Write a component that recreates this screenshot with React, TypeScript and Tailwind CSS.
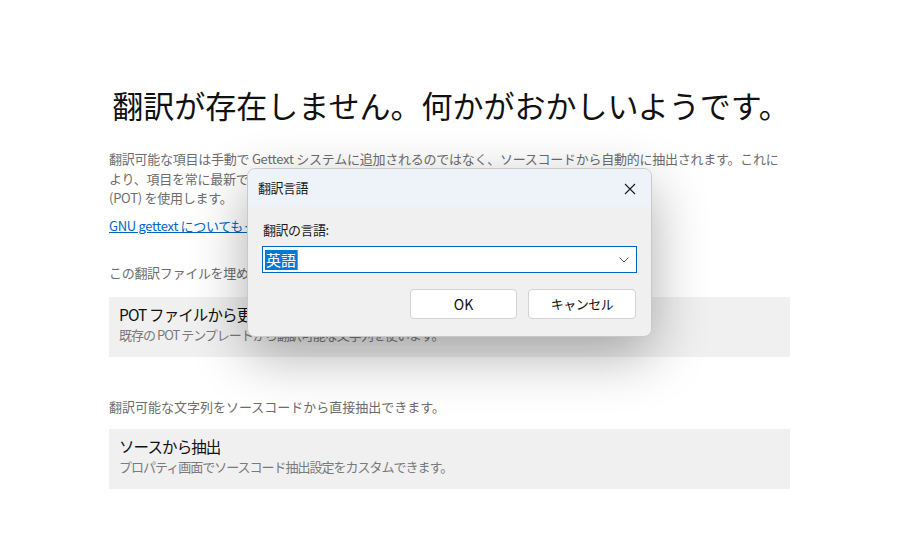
import React from "react";

const font = { fontFamily: '"Noto Sans CJK JP", "Noto Sans", sans-serif' };

function Card({ title, sub }: { title: string; sub: string }) {
  return (
    <div className="bg-[#f0f0f0] h-[60px] px-[10px] pt-[6px] flex flex-col">
      <div className="text-[15.5px] leading-[22px] text-[#111] tracking-[-0.9px]">{title}</div>
      <div className="text-[13px] leading-[20px] text-[#7a7a7a] tracking-[-1px]">{sub}</div>
    </div>
  );
}

export default function App() {
  return (
    <div className="relative w-[910px] h-[556px] bg-white overflow-hidden" style={font}>
      <div className="ml-[109px] w-[681px] pt-[85px] flex flex-col">
        <h1 className="-ml-[20px] -mr-[23px] text-[31px] leading-[40px] text-[#111] text-center whitespace-nowrap font-normal">
          翻訳が存在しません。何かがおかしいようです。
        </h1>
        <p className="mt-[24px] text-[13px] leading-[19.5px] text-[#6d6d6d] tracking-[-0.25px] whitespace-nowrap">
          翻訳可能な項目は手動で Gettext システムに追加されるのではなく、ソースコードから自動的に抽出されます。これに
          <br />
          より、項目を常に最新で正確な状態に保つことができます。翻訳にはテンプレートファイル
          <br />
          (POT) を使用します。
        </p>
        <a className="mt-[8px] text-[13px] leading-[19.5px] text-[#0067c0] underline tracking-[-0.3px]" href="#">
          GNU gettext についてもっと詳しく
        </a>
        <p className="mt-[28px] text-[13px] leading-[19.5px] text-[#6d6d6d] tracking-[-0.3px]">
          この翻訳ファイルを埋める方法は 2 つあります:
        </p>
        <div className="mt-[14px]">
          <Card title="POT ファイルから更新" sub="既存の POT テンプレートから翻訳可能な文字列を使います。" />
        </div>
        <p className="mt-[40px] text-[13px] leading-[19.5px] text-[#6d6d6d] tracking-[0px]">
          翻訳可能な文字列をソースコードから直接抽出できます。
        </p>
        <div className="mt-[13px]">
          <Card title="ソースから抽出" sub="プロパティ画面でソースコード抽出設定をカスタムできます。" />
        </div>
      </div>

      {/* Dialog */}
      <div className="absolute left-[247px] top-[168px] w-[405px] h-[169px] rounded-[8px] border border-[#c9c9c9] bg-[#f0f0f0] shadow-[0_18px_55px_rgba(0,0,0,0.32)] overflow-hidden flex flex-col">
        <div className="h-[38px] bg-[#eef2f9] flex items-center justify-between pl-[10px] pr-[15px]">
          <span className="text-[13px] text-[#1a1a1a] tracking-[-0.5px]">翻訳言語</span>
          <svg width="12" height="12" viewBox="0 0 12 12" className="mt-[1px]">
            <path d="M1 1L11 11M11 1L1 11" stroke="#1a1a1a" strokeWidth="1.1" />
          </svg>
        </div>
        <div className="flex flex-col px-[14px] pt-[14px]">
          <div className="text-[13px] leading-[18px] text-[#1a1a1a] pl-[1px] tracking-[-0.5px]">翻訳の言語:</div>
          <div className="mt-[7px] h-[27px] border border-[#0067c0] bg-white flex items-center pl-[2px] pr-[7px]">
            <span className="bg-[#0078d7] text-white text-[15px] leading-[20px] px-[1px]">英語</span>
            <span className="w-[1px] h-[20px] bg-[#e8801e]" />
            <div className="flex-1" />
            <svg width="10" height="6" viewBox="0 0 10 6">
              <path d="M0.5 0.5L5 5L9.5 0.5" fill="none" stroke="#555" strokeWidth="1" />
            </svg>
          </div>
          <div className="mt-[16px] flex justify-end gap-[11px] pr-[1px]">
            <button className="w-[107px] h-[30px] bg-white border border-[#d3d3d3] rounded-[4px] text-[14px] text-[#111]">
              OK
            </button>
            <button className="w-[108px] h-[30px] bg-white border border-[#d3d3d3] rounded-[4px] text-[13px] text-[#111] tracking-[-0.5px]">
              キャンセル
            </button>
          </div>
        </div>
      </div>
    </div>
  );
}
